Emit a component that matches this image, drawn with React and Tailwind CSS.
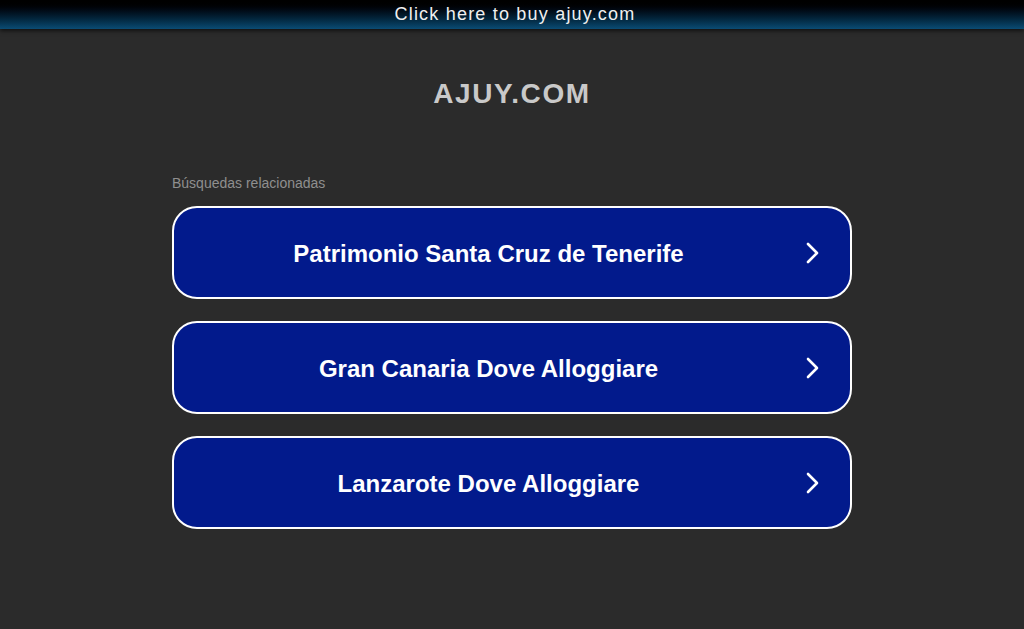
import React from "react";

const items = [
  "Patrimonio Santa Cruz de Tenerife",
  "Gran Canaria Dove Alloggiare",
  "Lanzarote Dove Alloggiare",
];

function Chevron() {
  return (
    <svg width="16" height="22" viewBox="0 0 16 22" className="shrink-0">
      <polyline
        points="5,2 14,11 5,20"
        fill="none"
        stroke="white"
        strokeWidth="2.6"
        strokeLinecap="round"
        strokeLinejoin="round"
      />
    </svg>
  );
}

export default function App() {
  return (
    <div
      className="min-h-[629px] bg-[#2b2b2b] flex flex-col"
      style={{ fontFamily: '"Liberation Sans", Arial, sans-serif' }}
    >
      <div className="h-[29px] pb-[2px] bg-gradient-to-b from-[#000000] to-[#0b4c74] shadow-[0_2px_4px_rgba(0,0,0,0.6)] flex items-center justify-center">
        <span className="text-[18px] tracking-[1.2px] text-[#f0f0f0] leading-none ml-[6px]">
          Click here to buy ajuy.com
        </span>
      </div>
      <div className="pt-[48px] flex justify-center">
        <h1 className="text-[28px] font-bold tracking-[1.6px] text-[#c9c9c9] leading-[33px]">AJUY.COM</h1>
      </div>
      <div className="w-[680px] mx-auto mt-[65px]">
        <div className="text-[14px] text-[#8f8f8f] leading-[16px]">Búsquedas relacionadas</div>
        <div className="mt-[15px] flex flex-col gap-[22px]">
          {items.map((t) => (
            <div
              key={t}
              className="h-[93px] rounded-[25px] border-2 border-white bg-[#021a8c] flex items-center"
            >
              <div className="flex-1 text-center text-white font-bold text-[24px] pt-[2px]">{t}</div>
              <div className="pr-[31px]">
                <Chevron />
              </div>
            </div>
          ))}
        </div>
      </div>
    </div>
  );
}
